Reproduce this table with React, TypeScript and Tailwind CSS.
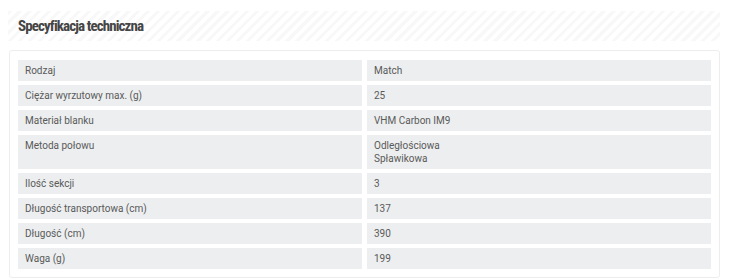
import React from 'react';

const specs: { label: string; value: string[] }[] = [
  { label: 'Rodzaj', value: ['Match'] },
  { label: 'Ciężar wyrzutowy max. (g)', value: ['25'] },
  { label: 'Materiał blanku', value: ['VHM Carbon IM9'] },
  { label: 'Metoda połowu', value: ['Odległościowa', 'Spławikowa'] },
  { label: 'Ilość sekcji', value: ['3'] },
  { label: 'Długość transportowa (cm)', value: ['137'] },
  { label: 'Długość (cm)', value: ['390'] },
  { label: 'Waga (g)', value: ['199'] },
];

export default function App() {
  return (
    <div className="w-[750px] h-[280px] overflow-hidden bg-white pl-[8px] pt-[11px] font-['Roboto',sans-serif]">
      {/* Striped section header */}
      <div className="w-[712px] h-[30px] flex items-center pl-[10px] bg-[repeating-linear-gradient(135deg,#f8f8f8_0px,#f8f8f8_3px,#ffffff_3px,#ffffff_7px)]">
        <h2 className="text-[15px] font-bold text-[#454545] tracking-[-0.9px] font-['Roboto_Condensed','Liberation_Sans_Narrow','DejaVu_Sans_Condensed',sans-serif]">
          Specyfikacja techniczna
        </h2>
      </div>

      {/* Spec table */}
      <div className="mt-[9px] ml-[1px] w-[711px] border border-[#ededed] rounded-[3px] px-[8px] pt-[9px] pb-[8px]">
        <div className="grid grid-cols-2 gap-x-[5px] gap-y-[4px] text-[10px] leading-[13px] text-[#5a5a5a]">
          {specs.map((s) => (
            <React.Fragment key={s.label}>
              <div className="bg-[#eceeef] px-[7px] py-[4px]">{s.label}</div>
              <div className="bg-[#eceeef] px-[7px] py-[4px]">
                {s.value.map((v) => (
                  <div key={v}>{v}</div>
                ))}
              </div>
            </React.Fragment>
          ))}
        </div>
      </div>
    </div>
  );
}
